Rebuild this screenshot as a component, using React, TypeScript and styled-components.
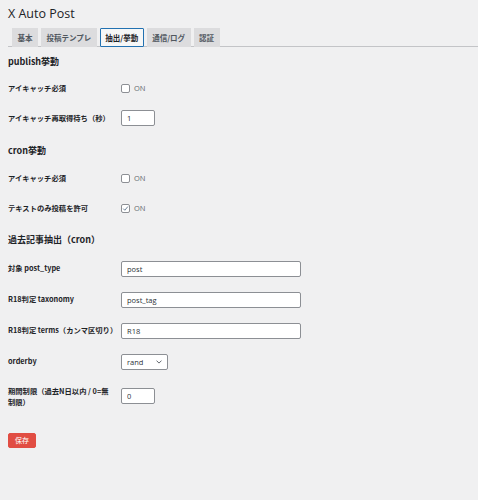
import React from 'react';
import styled, { createGlobalStyle } from 'styled-components';

const GlobalStyle = createGlobalStyle`
  html, body {
    margin: 0;
    padding: 0;
    background: #f0f0f1;
  }
  body {
    font-family: "Open Sans", "Noto Sans CJK JP", sans-serif;
    color: #1d2327;
  }
`;

const Wrap = styled.div`
  padding: 6px 8px 40px;
  min-height: 454px;
`;

const Title = styled.h1`
  margin: 0;
  font-size: 12.5px;
  line-height: 16px;
  font-weight: 400;
  color: #1d2327;
`;

const TabBar = styled.nav`
  display: flex;
  gap: 3px;
  margin-top: 6px;
  padding-left: 4px;
  border-bottom: 1px solid #c3c4c7;
  margin-right: -8px;
`;

const Tab = styled.span<{ $active?: boolean }>`
  display: flex;
  align-items: center;
  box-sizing: border-box;
  height: 19px;
  padding: 0 4.5px;
  margin-bottom: -1px;
  font-family: "Noto Sans CJK JP", sans-serif;
  font-size: 7.5px;
  font-weight: 700;
  color: ${(p) => (p.$active ? '#1d2327' : '#50575e')};
  background: ${(p) => (p.$active ? '#f6f7f7' : '#dcdcde')};
  border: 1px solid ${(p) => (p.$active ? '#2271b1' : '#dcdcde')};
  border-radius: ${(p) => (p.$active ? '1px' : '0')};
`;

const Heading = styled.h2<{ $mt: number; $mb: number }>`
  margin: ${(p) => p.$mt}px 0 ${(p) => p.$mb}px;
  font-family: "Noto Sans CJK JP", sans-serif;
  font-size: 9px;
  line-height: 14px;
  font-weight: 700;
  color: #1d2327;
`;

const Row = styled.div<{ $h?: number; $top?: boolean }>`
  display: grid;
  grid-template-columns: 113px 1fr;
  align-items: ${(p) => (p.$top ? 'start' : 'center')};
  justify-items: start;
  height: ${(p) => (p.$h ? `${p.$h}px` : 'auto')};
  padding-top: ${(p) => (p.$top ? '9px' : '0')};
`;

const Label = styled.label`
  font-family: "Noto Sans CJK JP", sans-serif;
  font-size: 7.3px;
  line-height: 11px;
  font-weight: 700;
  color: #1d2327;
  padding-right: 6px;
`;

const CheckLine = styled.span`
  display: flex;
  align-items: center;
  gap: 4px;
  font-size: 7.5px;
  color: #646970;
`;

const Box = styled.span`
  display: inline-flex;
  align-items: center;
  justify-content: center;
  width: 9px;
  height: 9px;
  box-sizing: border-box;
  border: 1px solid #8c8f94;
  border-radius: 2px;
  background: #fff;
`;

const TextInput = styled.input<{ $w: number; $mt?: number }>`
  display: block;
  width: ${(p) => p.$w}px;
  height: 16px;
  box-sizing: border-box;
  padding: 0 5px;
  margin: ${(p) => p.$mt ?? 0}px 0 0;
  border: 1px solid #8c8f94;
  border-radius: 2px;
  background: #fff;
  font-family: "Open Sans", "Noto Sans CJK JP", sans-serif;
  font-size: 7.5px;
  color: #2c3338;
  outline: none;
`;

const SelectWrap = styled.div`
  position: relative;
  width: 47px;
  height: 16px;
`;

const Select = styled.select`
  display: block;
  appearance: none;
  width: 47px;
  height: 16px;
  box-sizing: border-box;
  padding: 0 5px;
  margin: 0;
  border: 1px solid #8c8f94;
  border-radius: 2px;
  background: #fff;
  font-family: "Open Sans", "Noto Sans CJK JP", sans-serif;
  font-size: 7.5px;
  color: #2c3338;
  outline: none;
`;

const Chevron = styled.svg`
  position: absolute;
  right: 6px;
  top: 6px;
  pointer-events: none;
`;

const SaveButton = styled.button`
  display: block;
  margin-top: 25px;
  height: 15px;
  padding: 0 6px;
  border: 1px solid #e14d43;
  border-radius: 2px;
  background: #e14d43;
  color: #fff;
  font-family: "Noto Sans CJK JP", sans-serif;
  font-size: 7px;
  line-height: 13px;
`;

const Checkbox = ({ checked }: { checked?: boolean }) => (
  <CheckLine>
    <Box>
      {checked && (
        <svg width="7" height="7" viewBox="0 0 10 10">
          <path d="M1.8 5.2 L4 7.5 L8.4 2.2" fill="none" stroke="#6b7f95" strokeWidth="1.4" />
        </svg>
      )}
    </Box>
    ON
  </CheckLine>
);

const tabs = ['基本', '投稿テンプレ', '抽出/挙動', '通信/ログ', '認証'];

const App = () => (
  <>
    <GlobalStyle />
    <Wrap>
      <Title>X Auto Post</Title>
      <TabBar>
        {tabs.map((t) => (
          <Tab key={t} $active={t === '抽出/挙動'}>
            {t}
          </Tab>
        ))}
      </TabBar>

      <Heading $mt={8} $mb={4}>publish挙動</Heading>
      <Row $h={30}>
        <Label>アイキャッチ必須</Label>
        <Checkbox />
      </Row>
      <Row $h={30}>
        <Label>アイキャッチ再取得待ち（秒）</Label>
        <TextInput $w={34} defaultValue="1" />
      </Row>

      <Heading $mt={11} $mb={5}>cron挙動</Heading>
      <Row $h={30}>
        <Label>アイキャッチ必須</Label>
        <Checkbox />
      </Row>
      <Row $h={30}>
        <Label>テキストのみ投稿を許可</Label>
        <Checkbox checked />
      </Row>

      <Heading $mt={10} $mb={6}>過去記事抽出（cron）</Heading>
      <Row $h={31}>
        <Label>対象 post_type</Label>
        <TextInput $w={180} defaultValue="post" />
      </Row>
      <Row $h={31}>
        <Label>R18判定 taxonomy</Label>
        <TextInput $w={180} defaultValue="post_tag" />
      </Row>
      <Row $h={31}>
        <Label>R18判定 terms（カンマ区切り）</Label>
        <TextInput $w={180} defaultValue="R18" />
      </Row>
      <Row $h={31}>
        <Label>orderby</Label>
        <SelectWrap>
          <Select defaultValue="rand">
            <option value="rand">rand</option>
            <option value="date">date</option>
          </Select>
          <Chevron width="6" height="4" viewBox="0 0 6 4">
            <path d="M0.5 0.6 L3 3.1 L5.5 0.6" fill="none" stroke="#50575e" strokeWidth="0.9" />
          </Chevron>
        </SelectWrap>
      </Row>
      <Row $top>
        <Label>期間制限（過去N日以内 / 0=無制限）</Label>
        <TextInput $w={34} $mt={2} defaultValue="0" />
      </Row>

      <SaveButton>保存</SaveButton>
    </Wrap>
  </>
);

export default App;
